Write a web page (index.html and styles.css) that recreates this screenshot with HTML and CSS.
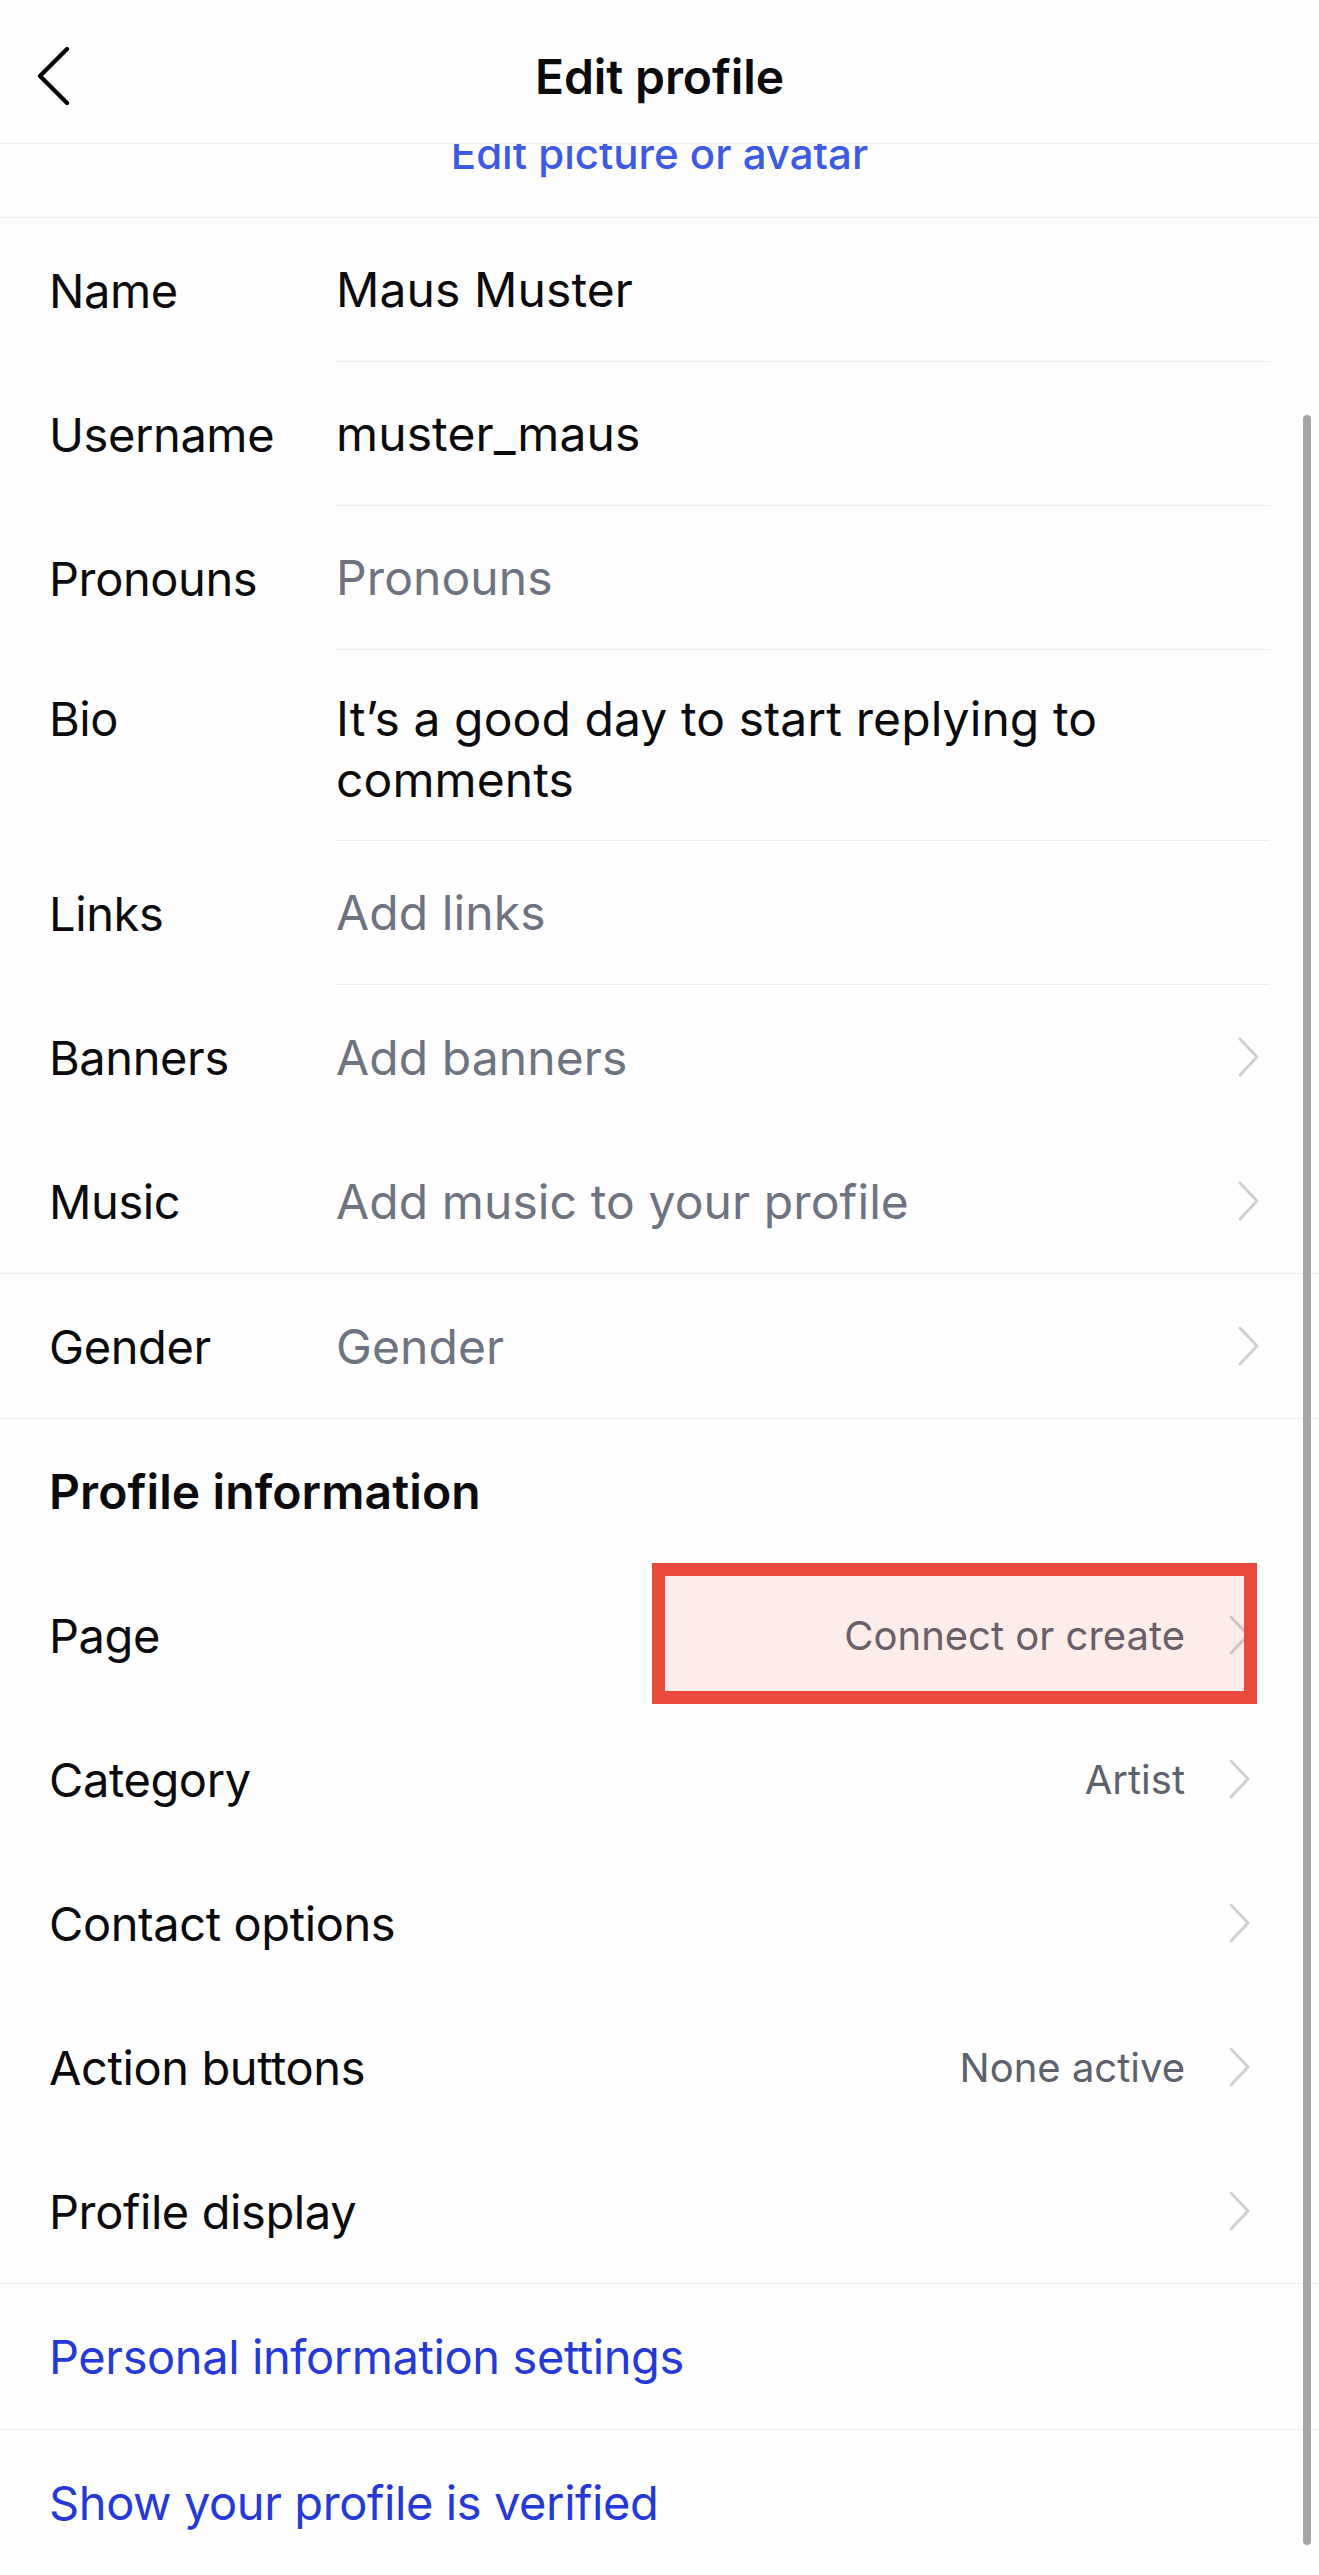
FILE: index.html
```html
<!DOCTYPE html>
<html lang="en">
<head>
<meta charset="utf-8">
<title>Edit profile</title>
<link rel="stylesheet" href="styles.css">
</head>
<body>
<div class="page">
  <header class="header">
    <div class="back">
      <svg width="34" height="60" viewBox="0 0 34 60" aria-hidden="true"><path d="M30 2 L3 29 L30 56" fill="none" stroke="#000" stroke-width="4.2" stroke-linecap="round" stroke-linejoin="round"/></svg>
    </div>
    <h1 class="title">Edit profile</h1>
    <div></div>
  </header>

  <div class="avatar-section">
    <span class="avatar-link">Edit picture or avatar</span>
  </div>

  <section class="group">
    <div class="row">
      <div class="label">Name</div>
      <div class="field sep"><span class="value">Maus Muster</span></div>
    </div>
    <div class="row">
      <div class="label">Username</div>
      <div class="field sep"><span class="value">muster_maus</span></div>
    </div>
    <div class="row">
      <div class="label">Pronouns</div>
      <div class="field sep"><span class="value placeholder">Pronouns</span></div>
    </div>
    <div class="row row-bio">
      <div class="label">Bio</div>
      <div class="field sep"><span class="value bio">It’s a good day to start replying to comments</span></div>
    </div>
    <div class="row">
      <div class="label">Links</div>
      <div class="field sep"><span class="value placeholder">Add links</span></div>
    </div>
    <div class="row">
      <div class="label">Banners</div>
      <div class="field"><span class="value placeholder">Add banners</span>
        <svg class="chev" width="24" height="42" viewBox="0 0 24 42" aria-hidden="true"><path d="M3 3 L20 21 L3 39" fill="none" stroke="#cfcfd4" stroke-width="3" stroke-linecap="round" stroke-linejoin="round"/></svg>
      </div>
    </div>
    <div class="row">
      <div class="label">Music</div>
      <div class="field"><span class="value placeholder">Add music to your profile</span>
        <svg class="chev" width="24" height="42" viewBox="0 0 24 42" aria-hidden="true"><path d="M3 3 L20 21 L3 39" fill="none" stroke="#cfcfd4" stroke-width="3" stroke-linecap="round" stroke-linejoin="round"/></svg>
      </div>
    </div>
  </section>

  <section class="group">
    <div class="row">
      <div class="label">Gender</div>
      <div class="field"><span class="value placeholder">Gender</span>
        <svg class="chev" width="24" height="42" viewBox="0 0 24 42" aria-hidden="true"><path d="M3 3 L20 21 L3 39" fill="none" stroke="#cfcfd4" stroke-width="3" stroke-linecap="round" stroke-linejoin="round"/></svg>
      </div>
    </div>
  </section>

  <section class="group">
    <div class="srow">
      <h2 class="section-title">Profile information</h2>
    </div>
    <div class="srow page-row">
      <span class="slabel">Page</span>
      <span class="svalue">Connect or create</span>
      <svg class="chev" width="24" height="42" viewBox="0 0 24 42" aria-hidden="true"><path d="M3 3 L20 21 L3 39" fill="none" stroke="#cfcfd4" stroke-width="3" stroke-linecap="round" stroke-linejoin="round"/></svg>
      <div class="highlight"></div>
    </div>
    <div class="srow">
      <span class="slabel">Category</span>
      <span class="svalue">Artist</span>
      <svg class="chev" width="24" height="42" viewBox="0 0 24 42" aria-hidden="true"><path d="M3 3 L20 21 L3 39" fill="none" stroke="#cfcfd4" stroke-width="3" stroke-linecap="round" stroke-linejoin="round"/></svg>
    </div>
    <div class="srow">
      <span class="slabel">Contact options</span>
      <span class="svalue"></span>
      <svg class="chev" width="24" height="42" viewBox="0 0 24 42" aria-hidden="true"><path d="M3 3 L20 21 L3 39" fill="none" stroke="#cfcfd4" stroke-width="3" stroke-linecap="round" stroke-linejoin="round"/></svg>
    </div>
    <div class="srow">
      <span class="slabel">Action buttons</span>
      <span class="svalue">None active</span>
      <svg class="chev" width="24" height="42" viewBox="0 0 24 42" aria-hidden="true"><path d="M3 3 L20 21 L3 39" fill="none" stroke="#cfcfd4" stroke-width="3" stroke-linecap="round" stroke-linejoin="round"/></svg>
    </div>
    <div class="srow">
      <span class="slabel">Profile display</span>
      <span class="svalue"></span>
      <svg class="chev" width="24" height="42" viewBox="0 0 24 42" aria-hidden="true"><path d="M3 3 L20 21 L3 39" fill="none" stroke="#cfcfd4" stroke-width="3" stroke-linecap="round" stroke-linejoin="round"/></svg>
    </div>
  </section>

  <section class="group">
    <div class="srow srow-link"><span class="link">Personal information settings</span></div>
  </section>
  <section class="group last">
    <div class="srow srow-link"><span class="link">Show your profile is verified</span></div>
  </section>

  <div class="scrollbar"></div>
</div>
</body>
</html>
```

FILE: styles.css
```css
html, body {
  margin: 0;
  padding: 0;
  background: #fefefe;
}

.page {
  position: relative;
  width: 1319px;
  height: 2575px;
  overflow: hidden;
  background: #fefefe;
  font-family: Inter, "Noto Sans", "Liberation Sans", sans-serif;
  color: #0b0b0d;
}

.header {
  box-sizing: border-box;
  height: 144px;
  padding-top: 10px;
  display: grid;
  grid-template-columns: 1fr auto 1fr;
  align-items: center;
  border-bottom: 1px solid #efeff1;
}

.back {
  padding-left: 37px;
  display: flex;
  align-items: center;
}

.back svg {
  display: block;
}

.title {
  margin: 0;
  font-size: 48px;
  font-weight: 600;
  letter-spacing: -0.1px;
}

.avatar-section {
  box-sizing: border-box;
  height: 74px;
  overflow: hidden;
  border-bottom: 1px solid #efeff1;
  text-align: center;
}

.avatar-link {
  display: inline-block;
  margin-top: -13px;
  font-size: 42px;
  line-height: 45px;
  font-weight: 500;
  color: #3d5ae4;
}

.group {
  border-bottom: 1px solid #ededf0;
}

.group.last {
  border-bottom: none;
}

.row {
  display: flex;
  min-height: 144px;
  padding-left: 49px;
}

.label {
  flex: none;
  width: 287px;
  display: flex;
  align-items: center;
  font-size: 47px;
  letter-spacing: -0.4px;
}

.field {
  flex: 1;
  display: flex;
  align-items: center;
  margin-right: 49px;
}

.field.sep {
  border-bottom: 1px solid #ededf0;
}

.value {
  flex: 1;
  font-size: 48px;
  letter-spacing: 0.1px;
}

.placeholder {
  color: #6e7380;
}

.row-bio {
  min-height: 191px;
}

.row-bio .label,
.row-bio .field {
  align-items: flex-start;
  padding-top: 38px;
}

.bio {
  max-width: 880px;
  line-height: 61px;
}

.row-bio .label {
  line-height: 61px;
}

.chev {
  flex: none;
  display: block;
  margin-right: 9px;
}

.srow {
  position: relative;
  box-sizing: border-box;
  height: 144px;
  display: flex;
  align-items: center;
  padding-left: 49px;
  padding-right: 58px;
}

.srow-link {
  height: 145px;
}

.section-title {
  margin: 0;
  font-size: 48px;
  font-weight: 600;
  letter-spacing: 0.1px;
}

.slabel {
  font-size: 47px;
  letter-spacing: -0.4px;
}

.svalue {
  flex: 1;
  text-align: right;
  margin-right: 43px;
  font-size: 40px;
  color: #5d616c;
}

.link {
  font-size: 47px;
  letter-spacing: -0.4px;
  color: #2439d6;
}

.highlight {
  position: absolute;
  left: 652px;
  top: 0;
  width: 605px;
  height: 141px;
  box-sizing: border-box;
  border: 13px solid #e84b3c;
  background: rgba(233, 76, 61, 0.1);
}

.scrollbar {
  position: absolute;
  right: 8px;
  top: 415px;
  width: 8px;
  height: 2130px;
  border-radius: 4px;
  background: #a4a4a9;
}
```
